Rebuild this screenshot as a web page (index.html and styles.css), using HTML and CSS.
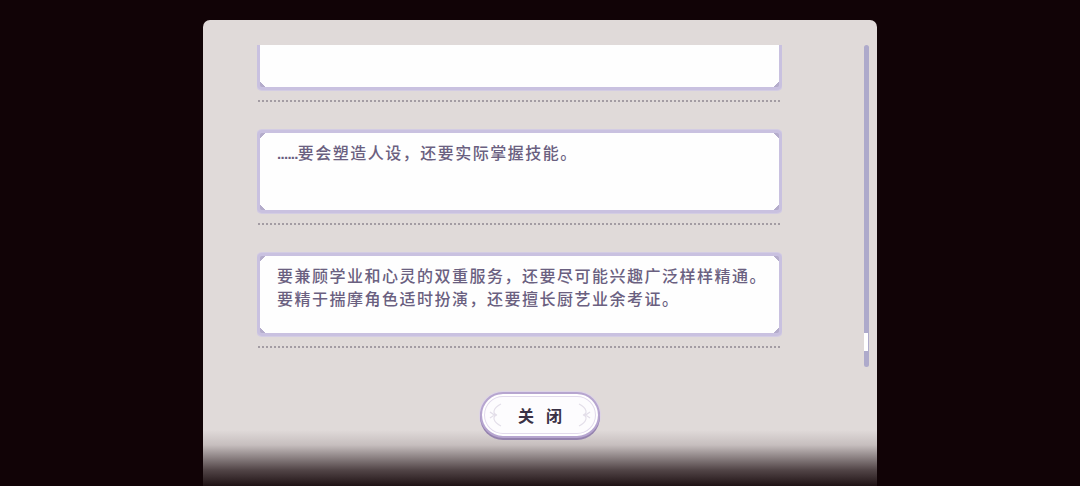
FILE: index.html
```html
<!DOCTYPE html>
<html lang="zh-CN">
<head>
<meta charset="utf-8">
<title>关闭</title>
<link rel="stylesheet" href="styles.css">
</head>
<body>
<div class="stage">
  <div class="panel">
    <div class="body">
      <div class="viewport">
        <div class="list">
          <div class="entry">
            <div class="card"></div>
            <div class="dots"></div>
          </div>
          <div class="entry">
            <div class="card"><p class="line"><span class="ellipsis">......</span>要会塑造人设，还要实际掌握技能。</p></div>
            <div class="dots"></div>
          </div>
          <div class="entry">
            <div class="card">
              <p class="line">要兼顾学业和心灵的双重服务，还要尽可能兴趣广泛样样精通。</p>
              <p class="line">要精于揣摩角色适时扮演，还要擅长厨艺业余考证。</p>
            </div>
            <div class="dots"></div>
          </div>
          <div class="entry">
            <div class="card"></div>
            <div class="dots"></div>
          </div>
        </div>
      </div>
      <div class="scrollbar"><div class="thumb"></div></div>
    </div>
    <div class="actions">
      <button class="close">
        <svg class="leaf" viewBox="0 0 14 26" width="14" height="26"><path d="M12 2 C4 6 3 12 8 13 C3 14 4 20 12 24 M8 13 C5 13 3 12 1 10 M8 13 C5 13 3 14 1 16" fill="none" stroke="#e3dee9" stroke-width="1.2"/></svg>
        <span class="label">关闭</span>
        <svg class="leaf flip" viewBox="0 0 14 26" width="14" height="26"><path d="M12 2 C4 6 3 12 8 13 C3 14 4 20 12 24 M8 13 C5 13 3 12 1 10 M8 13 C5 13 3 14 1 16" fill="none" stroke="#e3dee9" stroke-width="1.2"/></svg>
      </button>
    </div>
  </div>
</div>
</body>
</html>
```
FILE: styles.css
```css
html, body {
  margin: 0;
  padding: 0;
}
body {
  background: #110306;
  width: 1080px;
  height: 486px;
  overflow: hidden;
  font-family: "Noto Sans CJK SC", "Noto Sans", sans-serif;
}
.stage {
  display: flex;
  justify-content: center;
  padding-top: 20px;
  height: 486px;
  box-sizing: border-box;
}
.panel {
  width: 674px;
  height: 466px;
  border-radius: 7px 7px 0 0;
  background: linear-gradient(to bottom,
    #e0dad9 0,
    #e0dad9 410px,
    #c6bebe 425px,
    #8e8485 437px,
    #524547 450px,
    #1f1214 466px);
  display: flex;
  flex-direction: column;
}
.body {
  display: flex;
  padding: 25px 8px 0 54px;
}
.viewport {
  width: 525px;
  height: 322px;
  overflow: hidden;
}
.list {
  margin-top: -38px;
  display: flex;
  flex-direction: column;
}
.entry {
  height: 123px;
  display: flex;
  flex-direction: column;
}
.card {
  box-sizing: border-box;
  height: 83px;
  border: 3px solid #c9c1e0;
  border-radius: 5px;
  padding: 8px 10px 0 17px;
  background:
    linear-gradient(135deg, #b4accb 0 4px, transparent 4px) left top / 10px 10px no-repeat,
    linear-gradient(225deg, #b4accb 0 4px, transparent 4px) right top / 10px 10px no-repeat,
    linear-gradient(45deg, #b4accb 0 4px, transparent 4px) left bottom / 10px 10px no-repeat,
    linear-gradient(315deg, #b4accb 0 4px, transparent 4px) right bottom / 10px 10px no-repeat,
    #fefefe;
  box-shadow: 0 0 0 1px #d3cce3;
}
.line {
  margin: 0;
  color: #6a6080;
  font-size: 16px;
  line-height: 23px;
  font-weight: 500;
  letter-spacing: 1.5px;
  white-space: nowrap;
}
.ellipsis {
  font-family: "Liberation Sans", sans-serif;
  font-size: 15px;
  letter-spacing: -0.7px;
  font-weight: 700;
}
.dots {
  margin-top: 10px;
  height: 2px;
  background: radial-gradient(circle, #a39ca3 0.9px, transparent 1.1px) 0 0 / 4px 2px repeat-x;
}
.scrollbar {
  margin-left: auto;
  width: 5px;
  height: 322px;
  border-radius: 3px;
  background: #aeaacb;
  display: flex;
  flex-direction: column;
}
.thumb {
  margin-top: 288px;
  height: 18px;
  width: 4px;
  background: #ffffff;
}
.actions {
  display: flex;
  justify-content: center;
  padding-top: 25px;
}
.close {
  box-sizing: border-box;
  width: 120px;
  height: 46px;
  border-radius: 23px;
  border: 2px solid #b6a5cf;
  background: #fdfcfe;
  box-shadow:
    inset 0 0 0 2px #ffffff,
    inset 0 0 0 3px #e2daec,
    0 2px 0 #9482ad,
    0 0 0 1px #dcd3e6;
  display: flex;
  align-items: center;
  justify-content: space-between;
  padding: 0 7px;
  cursor: pointer;
}
.label {
  font-family: "Noto Sans CJK SC", sans-serif;
  font-weight: 700;
  font-size: 16px;
  color: #3a3145;
  letter-spacing: 12px;
  padding-left: 12px;
  line-height: 20px;
}
.leaf.flip {
  transform: scaleX(-1);
}
```
